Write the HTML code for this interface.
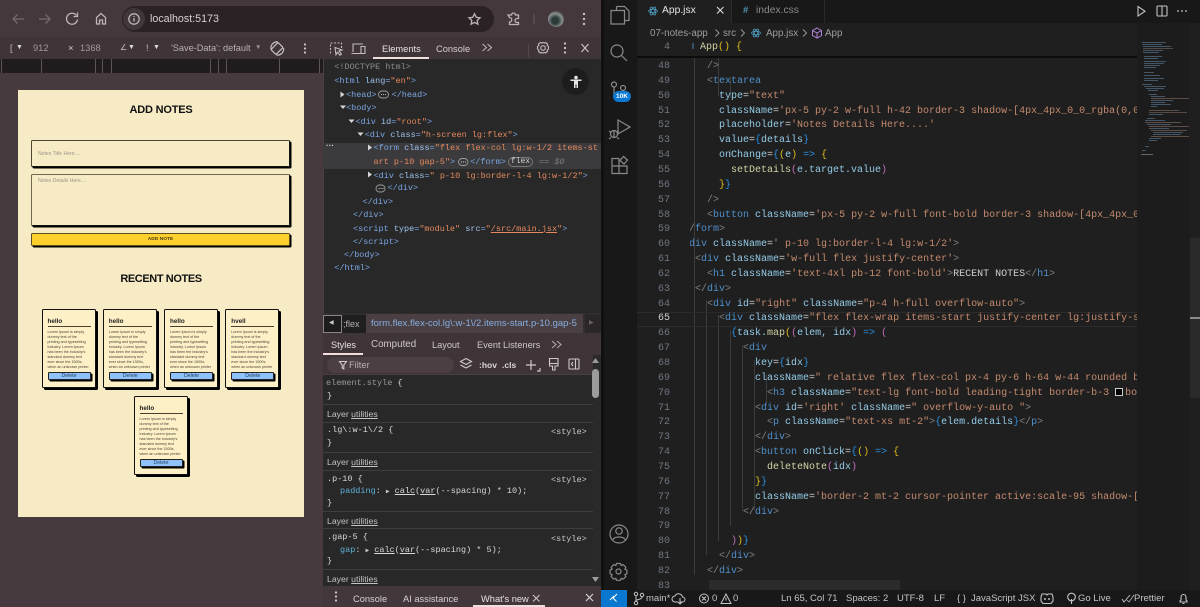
<!DOCTYPE html>
<html lang="en"><head><meta charset="utf-8"><title>Notes</title>
<style>
html,body{margin:0;padding:0;width:1200px;height:607px;overflow:hidden;background:#131313}
*{box-sizing:border-box}
body{position:relative;font-family:"Liberation Sans",sans-serif}
.a,.t,.d,.s,.c,.l{position:absolute}
.t{white-space:pre;line-height:14px;height:14px}
.d{font:8.5px/14px "Liberation Mono",monospace;white-space:pre;color:#7aa5e2;height:14px}
.s{font:8.5px/14px "Liberation Mono",monospace;white-space:pre;color:#d8d8d8;height:14px}
.d i,.s i{font-style:normal}
.n{color:#7aa5e2}.k{color:#9fc3ee}.v{color:#e5895e}.g{color:#8c8c8c}
svg{position:absolute;overflow:visible}
.card{position:absolute;width:54px;height:79px;background:#fdf0c6;border:1px solid #111;border-radius:1.5px;box-shadow:2px 2px 0 #000}
.card b{position:absolute;left:5px;top:8px;font-size:6.3px;line-height:7px;color:#222}
.card u{position:absolute;left:5px;top:16px;width:43px;height:1px;background:#4a4030}
.card p{position:absolute;left:5px;top:20px;margin:0;font-size:3.7px;line-height:5px;color:#4b4538;white-space:pre}
.card span{position:absolute;left:5px;top:62px;width:43px;height:8px;background:#8fc1fb;border:1px solid #222;border-radius:1px;box-shadow:1.5px 1.5px 0 #000;font-size:5.2px;line-height:6px;text-align:center;color:#23415f}
.num{position:absolute;left:640px;width:30px;text-align:right;font:10px/14px "Liberation Mono",monospace;color:#6e7681}
.l{font:10px/14px "Liberation Mono",monospace;white-space:pre;color:#93cbe8;height:14px}
.p{color:#808080}.b{color:#4f8fca}.r{color:#c48a6e}.y{color:#e0bd1c}.m{color:#c86cc2}.u{color:#2a8fe0}.f{color:#d2d2a4}.w{color:#cfcfcf}
.lay{position:absolute;left:323px;width:270px;height:1px;background:#3e3e3e}
.layt{position:absolute;left:327px;font-size:8.7px;line-height:12px;color:#c4c4c4}
.layt u{text-underline-offset:1px}
.st{position:absolute;font:8.5px/14px "Liberation Mono",monospace;color:#c8c8c8;left:551px}
</style></head><body>

<!-- Browser -->
<div class="a" style="left:0;top:0;width:601px;height:607px;background:#463a3e"></div>
<div class="a" style="left:0;top:0;width:601px;height:37px;background:#44383c"></div>
<div class="a" style="left:122px;top:6px;width:372px;height:26px;border-radius:13px;background:#2b2225"></div>
<div class="a" style="left:123px;top:8px;width:22px;height:22px;border-radius:11px;background:#41373a"></div>
<svg style="left:0;top:0" width="601" height="37" fill="none" stroke="#bdb4b7" stroke-width="1.3">
<g stroke="#75696d"><path d="M13 19h11M17.500 14.500 13 19l4.500 4.500"/><path d="M39 19h11M45.500 14.500 50 19l-4.500 4.500"/></g>
<path d="M76.500 15.500a5.500 5.500 0 1 0 1 4"/><path d="M77.500 12.500v4h-4" />
<path d="M96.500 24v-6.500l4.500-4 4.500 4V24h-3v-4h-3v4z"/>
<circle cx="134" cy="19" r="5.200"/><path d="M134 18v3.500M134 16v1"/>
<path d="m474.500 13.800 1.700 3.500 3.800.5-2.800 2.600.7 3.800-3.400-1.800-3.400 1.800.7-3.800-2.800-2.600 3.800-.5z"/>
<path d="M508 15h3.500a2 2 0 0 1 4 0h3v3.500h-1.500a2 2 0 0 0 0 4h1.500V24.500h-9v-2.500a2 2 0 0 0 0-4.500z"/>
<path d="M534 14v10" stroke="#5e5256"/>
<g fill="#c9c1c3" stroke="none"><circle cx="584" cy="14" r="1.200"/><circle cx="584" cy="19" r="1.200"/><circle cx="584" cy="24" r="1.200"/></g>
</svg>
<div class="a" style="left:548px;top:11px;width:16px;height:16px;border-radius:8px;background:radial-gradient(circle at 45% 60%,#2d3a3a 25%,#8a9090 55%,#2a2a2a 85%)"></div>
<div class="t" style="left:150px;top:12px;font-size:10.7px;color:#d6d0d2">localhost:5173</div>

<div class="a" style="left:0;top:37px;width:323px;height:22px;background:#3f3438"></div>
<div class="t" style="left:10px;top:41px;font-size:9px;color:#c7c0c2">[</div>
<div class="t" style="left:16px;top:41px;font-size:7px;color:#dcd6d8">▼</div>
<div class="t" style="left:33px;top:41px;font-size:9.300px;color:#a0989b">912</div>
<div class="t" style="left:68px;top:42px;font-size:9.500px;color:#cfc8ca">×</div>
<div class="t" style="left:80px;top:41px;font-size:9.300px;color:#a0989b">1368</div>
<div class="t" style="left:120px;top:41px;font-size:8px;color:#c7c0c2">∠</div>
<div class="t" style="left:128px;top:41px;font-size:7px;color:#dcd6d8">▼</div>
<div class="t" style="left:146px;top:41px;font-size:9px;color:#c7c0c2">!</div>
<div class="t" style="left:153px;top:41px;font-size:7px;color:#dcd6d8">▼</div>
<div class="t" style="left:171px;top:41px;font-size:9.200px;color:#b9b1b4">'Save-Data': default</div>
<div class="t" style="left:255px;top:41px;font-size:6.500px;color:#9a9194">▼</div>
<svg style="left:270px;top:41px" width="15" height="15" fill="none" stroke="#c8c0c3" stroke-width="1.200"><rect x="3.500" y="2.500" width="7" height="10" rx="1" transform="rotate(45 7 7.500)"/><path d="M1 8a6 6 0 0 1 7-7M13.500 7a6 6 0 0 1-7 7"/></svg>
<svg style="left:302px;top:42px" width="6" height="13" fill="#d0c8ca"><circle cx="3" cy="2.500" r="1.100"/><circle cx="3" cy="6.500" r="1.100"/><circle cx="3" cy="10.500" r="1.100"/></svg>

<div class="a" style="left:0;top:59px;width:323px;height:14px;background:#201c1d"></div>
<svg style="left:0;top:59px" width="323" height="14" stroke="#5c5558"><path d="M1.500 0v14M41.500 0v14M95.500 0v14M102.500 0v14M111.500 0v14M210.500 0v14M218.500 0v14M226.500 0v14M279.500 0v14M319.500 0v14"/></svg>

<!-- Page -->
<div class="a" style="left:18px;top:90px;width:286px;height:427px;background:#f7ebc6"></div>
<div class="t" style="left:18px;top:103px;width:286px;text-align:center;font-size:11px;letter-spacing:-.2px;font-weight:700;color:#111">ADD NOTES</div>
<div class="a" style="left:31px;top:140px;width:259px;height:27px;border:1px solid #4e4832;border-radius:1.500px;box-shadow:1.500px 1.500px 0 #000;border-right-color:#111;border-bottom-color:#111"></div>
<div class="t" style="left:38px;top:147px;font-size:5.100px;color:#9c948a">Notes Title Here....</div>
<div class="a" style="left:31px;top:174px;width:259px;height:52px;border:1px solid #6f6a4f;border-radius:1.500px;box-shadow:1.500px 1.500px 0 #000;border-right-color:#111;border-bottom-color:#111"></div>
<div class="t" style="left:38px;top:174px;font-size:5.100px;color:#9c948a">Notes Details Here....</div>
<div class="a" style="left:31px;top:233px;width:259px;height:13px;background:#fdd02e;border:1px solid #5c4f20;border-radius:1.500px;box-shadow:1.500px 1.500px 0 #000"></div>
<div class="t" style="left:31px;top:232.500px;width:259px;text-align:center;font-size:4.900px;font-weight:700;color:#4a3d18">ADD NOTE</div>
<div class="t" style="left:18px;top:272px;width:286px;text-align:center;font-size:11px;letter-spacing:-.4px;font-weight:700;color:#111">RECENT NOTES</div>

<div class="card" style="left:41.500px;top:309px"><b>hello</b><u></u><p>Lorem Ipsum is simply
dummy text of the
printing and typesetting
industry. Lorem Ipsum
has been the industry's
standard dummy text
ever since the 1500s,
when an unknown printer</p><span>Delete</span></div>
<div class="card" style="left:102.800px;top:309px"><b>hello</b><u></u><p>Lorem Ipsum is simply
dummy text of the
printing and typesetting
industry. Lorem Ipsum
has been the industry's
standard dummy text
ever since the 1500s,
when an unknown printer</p><span>Delete</span></div>
<div class="card" style="left:164px;top:309px"><b>hello</b><u></u><p>Lorem Ipsum is simply
dummy text of the
printing and typesetting
industry. Lorem Ipsum
has been the industry's
standard dummy text
ever since the 1500s,
when an unknown printer</p><span>Delete</span></div>
<div class="card" style="left:225.300px;top:309px"><b>hvell</b><u></u><p>Lorem Ipsum is simply
dummy text of the
printing and typesetting
industry. Lorem Ipsum
has been the industry's
standard dummy text
ever since the 1500s,
when an unknown printer</p><span>Delete</span></div>
<div class="card" style="left:133.500px;top:395.500px"><b>hello</b><u></u><p>Lorem Ipsum is simply
dummy text of the
printing and typesetting
industry. Lorem Ipsum
has been the industry's
standard dummy text
ever since the 1500s,
when an unknown printer</p><span>Delete</span></div>

<!-- DevTools -->
<div class="a" style="left:323px;top:37px;width:278px;height:570px;background:#282828"></div>
<div class="a" style="left:323px;top:59px;width:1px;height:254px;background:#4a4044"></div>
<div class="a" style="left:323px;top:37px;width:278px;height:22px;background:#3f3438"></div>
<svg style="left:323px;top:37px" width="278" height="22" fill="none" stroke="#c3bbbe" stroke-width="1.100">
<path d="M8 16H7.500V6h11v5" stroke-dasharray="2 1.500"/><path d="M12 10.500l7 2.500-3 1 2.500 3-1.500 1.200-2.500-3-1.500 2.500z"/>
<path d="M30 15V7h10M28.500 16.500h9M38 9.500h4v7h-4z"/>
<path d="M205.500 7v13" stroke="#544a4e"/>
<circle cx="220" cy="11" r="2.300"/><path d="m220 5.500 1.500.5 1-.5 2 1.500-.3 1.500 1.300 1v2.500l-1.300 1 .3 1.500-2 1.500-1-.5-1.500.5-1.500-.5-1 .5-2-1.500.3-1.500-1.300-1V9.500l1.300-1-.3-1.500 2-1.500 1 .5z"/>
<path d="m258.500 7 7 8M265.500 7l-7 8" stroke-width="1.300"/>
<path d="m159.500 7 4 3.500-4 3.500M164.500 7l4 3.500-4 3.500" stroke-width="1"/>
<g fill="#d0c8ca" stroke="none"><circle cx="242" cy="6.500" r="1.100"/><circle cx="242" cy="11" r="1.100"/><circle cx="242" cy="15.500" r="1.100"/></g>
</svg>
<div class="t" style="left:382px;top:42px;font-size:9.300px;color:#e8e2e4">Elements</div>
<div class="a" style="left:373px;top:56.500px;width:56px;height:2px;background:#f3dcdc"></div>
<div class="t" style="left:436px;top:42px;font-size:9.300px;color:#d7d0d2">Console</div>

<div class="a" style="left:323px;top:143px;width:278px;height:26px;background:#3b3b3d"></div>
<div class="t" style="left:326px;top:139px;font-size:8px;color:#cfcfcf;font-weight:700">···</div>

<div class="d g" style="left:334.300px;top:60px">&lt;!DOCTYPE html&gt;</div>
<div class="d" style="left:334.300px;top:74px">&lt;html <i class="k">lang</i>=<i class="v">"en"</i>&gt;</div>
<div class="d" style="left:346px;top:87.500px">&lt;head&gt;<i style="display:inline-block;width:15px"></i>&lt;/head&gt;</div>
<div class="d" style="left:346px;top:101px">&lt;body&gt;</div>
<div class="d" style="left:355.500px;top:114.500px">&lt;div <i class="k">id</i>=<i class="v">"root"</i>&gt;</div>
<div class="d" style="left:364.700px;top:128px">&lt;div <i class="k">class</i>=<i class="v">"h-screen lg:flex"</i>&gt;</div>
<div class="a" style="left:364px;top:141px;width:237px;height:14px;overflow:hidden"><div class="d" style="left:9.500px;top:0">&lt;form <i class="k">class</i>=<i class="v">"flex flex-col lg:w-1/2 items-st</i></div></div>
<div class="d" style="left:373.500px;top:155px"><i class="v">art p-10 gap-5"</i>&gt;<i style="display:inline-block;width:15px"></i>&lt;/form&gt;</div>
<div class="a" style="left:508px;top:157px;width:25px;height:10px;border:1px solid #777;border-radius:5px;font:8px/8px 'Liberation Mono',monospace;color:#d4d4d4;text-align:center">flex</div>
<div class="d" style="left:539px;top:155px;color:#7d7d7d">== <i style="font-style:italic">$0</i></div>
<div class="d" style="left:373.500px;top:168.500px">&lt;div <i class="k">class</i>=<i class="v">" p-10 lg:border-l-4 lg:w-1/2"</i>&gt;</div>
<div class="d" style="left:387.500px;top:181px">&lt;/div&gt;</div>
<div class="d" style="left:362.500px;top:194.500px">&lt;/div&gt;</div>
<div class="d" style="left:353px;top:208px">&lt;/div&gt;</div>
<div class="d" style="left:353px;top:221.500px">&lt;script <i class="k">type</i>=<i class="v">"module"</i> <i class="k">src</i>=<i class="v">"<u>/src/main.jsx</u>"</i>&gt;</div>
<div class="d" style="left:353px;top:234.500px">&lt;/script&gt;</div>
<div class="d" style="left:344px;top:247.500px">&lt;/body&gt;</div>
<div class="d" style="left:334.300px;top:261px">&lt;/html&gt;</div>

<svg style="left:323px;top:59px" width="278" height="140" fill="#d6d6d6">
<path d="M17.500 32.500v6l4-3zM17 46.500h6l-3 3.500zM25.500 60.500h6l-3 3.500zM34.500 73.500h6l-3 3.500zM45 85.500v6l4-3zM45 112.500v6l4-3z"/>
<g fill="none" stroke="#9b9b9b" stroke-width=".9"><rect x="55.500" y="32" width="10" height="7" rx="3.500"/><rect x="135.500" y="99.500" width="9.500" height="7" rx="3.500"/><rect x="53" y="126" width="9" height="7" rx="3.500"/></g>
<g fill="#c4c4c4"><rect x="58" y="35" width="1" height="1"/><rect x="60" y="35" width="1" height="1"/><rect x="62" y="35" width="1" height="1"/><rect x="138" y="102.500" width="1" height="1"/><rect x="140" y="102.500" width="1" height="1"/><rect x="142" y="102.500" width="1" height="1"/><rect x="55.500" y="129" width="1" height="1"/><rect x="57.500" y="129" width="1" height="1"/><rect x="59.500" y="129" width="1" height="1"/></g>
</svg>
<div class="a" style="left:562px;top:68px;width:27px;height:27px;border-radius:14px;background:#1d1d1d"></div>
<svg style="left:569px;top:75px" width="14" height="14" fill="#e4e4e4"><circle cx="7" cy="2.500" r="1.800"/><path d="M1.500 4.500h11v1.500H9v7H7.500v-3.500h-1V13H5V6H1.500z"/></svg>

<div class="a" style="left:323px;top:313px;width:278px;height:20px;background:#322d2f"></div>
<div class="a" style="left:323px;top:315px;width:19px;height:18px;background:#1c1c1c;border:1px solid #8b8386"></div>
<div class="t" style="left:329px;top:316px;font-size:6px;color:#ccc">◀</div>
<div class="a" style="left:342px;top:315px;width:24px;height:18px;background:#1f1f1f"></div>
<div class="t" style="left:343px;top:317px;font-size:9px;color:#b8b2b4">;flex</div>
<div class="a" style="left:366px;top:314px;width:217px;height:19px;background:#4a3f43"></div>
<div class="t" style="left:371px;top:317px;font-size:9.500px;color:#85aee0">form.flex.flex-col.lg\:w-1\/2.items-start.p-10.gap-5</div>
<div class="a" style="left:585px;top:315px;width:16px;height:18px;background:#2b2627"></div>
<div class="t" style="left:589px;top:316px;font-size:6px;color:#6a6265">▶</div>

<div class="a" style="left:323px;top:333px;width:278px;height:23px;background:#3f3438"></div>
<div class="t" style="left:331px;top:338px;font-size:9.200px;color:#e6dfe1">Styles</div>
<div class="a" style="left:323px;top:352.500px;width:40px;height:2px;background:#f3dcdc"></div>
<div class="t" style="left:371px;top:338px;font-size:9.800px;color:#cfc8ca">Computed</div>
<div class="t" style="left:432px;top:338px;font-size:9.200px;color:#cfc8ca">Layout</div>
<div class="t" style="left:477px;top:338px;font-size:9.200px;color:#cfc8ca">Event Listeners</div>
<div class="a" style="left:323px;top:355px;width:270px;height:20px;background:#3f3438"></div>
<div class="a" style="left:327px;top:357px;width:127px;height:16px;border-radius:8px;background:#4b3f44"></div>
<div class="t" style="left:349px;top:358px;font-size:9.300px;color:#b9b1b4">Filter</div>
<div class="t" style="left:479px;top:358px;font-size:8.500px;color:#dcd6d8;font-weight:700">:hov</div>
<div class="t" style="left:502px;top:358px;font-size:8.500px;color:#dcd6d8;font-weight:700">.cls</div>
<svg style="left:323px;top:333px" width="278" height="42" fill="none" stroke="#d0c8ca" stroke-width="1.100">
<path d="m229 8 4 3.500-4 3.500M234 8l4 3.500-4 3.500" stroke="#b0a8ab"/>
<path d="M16.500 28.500h7l-2.700 3.500v4l-1.600-1v-3z"/>
<path d="m143 25.500 5.500 3-5.500 3-5.500-3zM137.500 32l5.500 3 5.500-3"/>
<path d="M203 32h10M208 27v10M214 38h3v-3" stroke-width="1.200"/>
<path d="M226.500 25.500h8.500v5h-8.500zM226.500 30.500h8.500v2.500h-3v4h-2.500v-4h-3z"/>
<rect x="246" y="26" width="10" height="10" rx=".8"/><path d="M252.500 26v10M250 29l-1.500 2 1.500 2"/>
</svg>
<div class="a" style="left:323px;top:374px;width:270px;height:1px;background:#4a4044"></div>

<div class="s" style="left:326px;top:376px"><i style="color:#9a9a9a">element.style</i> {</div>
<div class="s" style="left:327px;top:389px">}</div>
<div class="lay" style="top:404px"></div>
<div class="layt" style="top:408px">Layer <u>utilities</u></div>
<div class="lay" style="top:422px"></div>
<div class="s" style="left:327px;top:423px">.lg\:w-1\/2 {</div>
<div class="st" style="top:425px">&lt;style&gt;</div>
<div class="s" style="left:327px;top:436px">}</div>
<div class="lay" style="top:452px"></div>
<div class="layt" style="top:456px">Layer <u>utilities</u></div>
<div class="lay" style="top:470px"></div>
<div class="s" style="left:327px;top:472px">.p-10 {</div>
<div class="st" style="top:473px">&lt;style&gt;</div>
<div class="s" style="left:340px;top:484px"><i style="color:#5db0d7">padding</i>: <i style="color:#ccc;font-size:6px">▶</i> <u>calc</u>(<u>var</u>(--spacing) * 10);</div>
<div class="s" style="left:327px;top:496px">}</div>
<div class="lay" style="top:511px"></div>
<div class="layt" style="top:515px">Layer <u>utilities</u></div>
<div class="lay" style="top:528px"></div>
<div class="s" style="left:327px;top:530px">.gap-5 {</div>
<div class="st" style="top:532px">&lt;style&gt;</div>
<div class="s" style="left:340px;top:543px"><i style="color:#5db0d7">gap</i>: <i style="color:#ccc;font-size:6px">▶</i> <u>calc</u>(<u>var</u>(--spacing) * 5);</div>
<div class="s" style="left:327px;top:554px">}</div>
<div class="lay" style="top:569px"></div>
<div class="layt" style="top:573px">Layer <u>utilities</u></div>

<div class="a" style="left:593px;top:355px;width:8px;height:231px;background:#2a2a2a"></div>
<div class="a" style="left:592px;top:369px;width:7px;height:29px;border-radius:3.500px;background:#9c9c9c"></div>
<svg style="left:591px;top:357px" width="9" height="230" fill="#9c9c9c"><path d="M4.500 1 8 6H1zM1 220h7l-3.500 5z"/></svg>

<div class="a" style="left:323px;top:586px;width:278px;height:21px;background:#42373b"></div>
<svg style="left:333px;top:590px" width="6" height="13" fill="#d0c8ca"><circle cx="3" cy="2.500" r="1.100"/><circle cx="3" cy="6.500" r="1.100"/><circle cx="3" cy="10.500" r="1.100"/></svg>
<div class="t" style="left:353px;top:592px;font-size:9.300px;color:#d7d0d2">Console</div>
<div class="t" style="left:403px;top:592px;font-size:9.300px;color:#d7d0d2">AI assistance</div>
<div class="t" style="left:481px;top:592px;font-size:9.300px;color:#e8e2e4">What's new</div>
<svg style="left:532px;top:594px" width="9" height="9" fill="none" stroke="#d0c8ca"><path d="m1 1 6.500 6.500M7.500 1 1 7.500"/></svg>
<svg style="left:585px;top:593px" width="9" height="9" fill="none" stroke="#d8d2d4" stroke-width="1.200"><path d="m1 1 7 7M8 1 1 8"/></svg>
<div class="a" style="left:473px;top:605px;width:72px;height:2px;background:#f3dcdc"></div>

<!-- VS Code -->
<div class="a" style="left:601px;top:0;width:4px;height:607px;background:#101010"></div>
<div class="a" style="left:604px;top:0;width:33px;height:607px;background:#181818"></div>
<div class="a" style="left:637px;top:0;width:563px;height:607px;background:#1f1f1f"></div>
<div class="a" style="left:637px;top:0;width:563px;height:23px;background:#181818"></div>
<div class="a" style="left:637px;top:0;width:94px;height:23px;background:#1f1f1f"></div>
<div class="a" style="left:731px;top:0;width:1px;height:23px;background:#2a2a2a"></div>
<div class="a" style="left:824px;top:0;width:1px;height:23px;background:#2a2a2a"></div>

<svg style="left:604px;top:0" width="33" height="607" fill="none" stroke="#8a8a8a" stroke-width="1.200">
<path d="M12.500 6.500h8l4.500 4.500v9.500h-4M12.500 6.500v3.500M7 10.500h13.500v13.500H7z"/>
<circle cx="13" cy="51" r="6"/><path d="m17.500 55.500 5.500 5.500"/>
<circle cx="10" cy="84.500" r="2.500"/><circle cx="19" cy="88" r="2.500"/><path d="M10 87v9M19 90.500c0 3-9 2-9 6"/>
<path d="M14 120v14l12-7z"/><circle cx="10" cy="134" r="3.500"/><path d="M5 131l2 1.500M15 131l-2 1.500M5 139l2-1.500M15 139l-2-1.500M10 130v8"/>
<path d="M8 158.500h7v7.500H8zM8 166h7v7.500H8zM15 166h8v7.500h-8z"/><path d="m19.500 156.500 4 3.500-3.500 4-4-3.500z"/>
<circle cx="15" cy="534" r="9"/><circle cx="15" cy="531" r="3.200"/><path d="M8.500 540c2-4 11-4 13 0"/>
<circle cx="14.500" cy="571.500" r="2.500"/><path d="m12.500 563.500h4l.7 2 2-.9 2.600 2.600-.9 2 2 .8v3.800l-2 .8.900 2-2.600 2.600-2-.9-.7 2h-4l-.7-2-2 .9-2.600-2.600.9-2-2-.8V570l2-.8-.9-2 2.600-2.600 2 .9z"/>
</svg>
<div class="a" style="left:613px;top:91px;width:18px;height:11px;border-radius:6px;background:#0a78d0;color:#fff;font-size:6.500px;line-height:11px;font-weight:700;text-align:center">10K</div>

<svg style="left:648px;top:6px" width="10" height="10" fill="none" stroke="#4e9cc0" stroke-width=".8"><ellipse cx="5" cy="5" rx="4.500" ry="1.800"/><ellipse cx="5" cy="5" rx="4.500" ry="1.800" transform="rotate(60 5 5)"/><ellipse cx="5" cy="5" rx="4.500" ry="1.800" transform="rotate(120 5 5)"/></svg>
<div class="t" style="left:662px;top:4px;font-size:10.300px;color:#e3e3e3">App.jsx</div>
<svg style="left:716px;top:6px" width="9" height="9" fill="none" stroke="#ddd" stroke-width="1.100"><path d="m1 1 6.500 6.500M7.500 1 1 7.500"/></svg>
<div class="t" style="left:743px;top:4px;font-size:9.500px;color:#519aba;font-weight:700">#</div>
<div class="t" style="left:756px;top:4px;font-size:10.300px;color:#8a8a8a">index.css</div>

<div class="t" style="left:650px;top:27px;font-size:9.800px;color:#9d9d9d">07-notes-app</div>
<div class="t" style="left:723px;top:27px;font-size:9.800px;color:#9d9d9d">src</div>
<div class="t" style="left:766px;top:27px;font-size:9.800px;color:#9d9d9d">App.jsx</div>
<div class="t" style="left:825px;top:27px;font-size:9.800px;color:#9d9d9d">App</div>
<svg style="left:600px;top:20px" width="300" height="30" fill="none" stroke="#9d9d9d" stroke-width=".9">
<path d="m115.500 9.500 3.500 3.500-3.500 3.500M141 9.500l3.500 3.500-3.500 3.500M203 9.500l3.500 3.500-3.500 3.500"/>
<g stroke="#4e9cc0" stroke-width=".8"><ellipse cx="156" cy="13" rx="4.500" ry="1.800"/><ellipse cx="156" cy="13" rx="4.500" ry="1.800" transform="rotate(60 156 13)"/><ellipse cx="156" cy="13" rx="4.500" ry="1.800" transform="rotate(120 156 13)"/></g>
<path d="m217 8 4.500 2.500v5L217 18l-4.500-2.500v-5zM212.500 10.500l4.500 2.500 4.500-2.500M217 13v5" stroke="#b180d7" stroke-width="1"/>
</svg>
<svg style="left:1130px;top:0" width="70" height="23" fill="none" stroke="#c4c4c4" stroke-width="1.100">
<path d="M8 6.500v9.500l7-4.750z"/><rect x="27" y="6" width="10" height="10" rx="1"/><path d="M32 6v10"/>
<g fill="#c4c4c4" stroke="none"><circle cx="48" cy="11" r=".9"/><circle cx="52" cy="11" r=".9"/><circle cx="56" cy="11" r=".9"/></g>
</svg>

<!-- indent guides -->
<svg style="left:637px;top:57px" width="500" height="535" stroke="#3c3c3c" fill="none">
<path d="M57.500 0v518M69.500 243v255M81.500 258v226"/>
<path d="M93.500 273v196M105.500 288v166M117.500 303v150M129.500 318v30"/>
<path d="M81.500 -1v40"/>
<path d="M93.500 92v8M93.500 21v20"/>
</svg>
<div class="a" style="left:637px;top:312px;width:500px;height:15px;border-top:1px solid #2b2b2b;border-bottom:1px solid #2b2b2b"></div>

<div class="num" style="top:41px;color:#7a7a7a">4</div>
<div class="num" style="top:60px">48</div><div class="num" style="top:74.800px">49</div><div class="num" style="top:89.600px">50</div><div class="num" style="top:104.500px">51</div><div class="num" style="top:119.300px">52</div><div class="num" style="top:134.200px">53</div><div class="num" style="top:149px">54</div><div class="num" style="top:163.900px">55</div><div class="num" style="top:178.700px">56</div><div class="num" style="top:193.600px">57</div><div class="num" style="top:208.500px">58</div><div class="num" style="top:223.300px">59</div><div class="num" style="top:238.200px">60</div><div class="num" style="top:253px">61</div><div class="num" style="top:267.900px">62</div><div class="num" style="top:282.700px">63</div><div class="num" style="top:297.600px">64</div><div class="num" style="top:312.400px;color:#cfcfcf">65</div><div class="num" style="top:327.300px">66</div><div class="num" style="top:342.100px">67</div><div class="num" style="top:357px">68</div><div class="num" style="top:371.800px">69</div><div class="num" style="top:386.700px">70</div><div class="num" style="top:401.500px">71</div><div class="num" style="top:416.400px">72</div><div class="num" style="top:431.200px">73</div><div class="num" style="top:446.100px">74</div><div class="num" style="top:460.900px">75</div><div class="num" style="top:475.800px">76</div><div class="num" style="top:490.600px">77</div><div class="num" style="top:505.500px">78</div><div class="num" style="top:520.300px">79</div><div class="num" style="top:535.200px">80</div><div class="num" style="top:550px">81</div><div class="num" style="top:564.900px">82</div><div class="num" style="top:579.700px">83</div>

<div class="a" style="left:690px;top:0;width:447px;height:590px;overflow:hidden" id="code">
<div class="l" style="left:0;top:41px"><span class="b">ו</span></div>
<div class="l w" style="left:10px;top:41px"><span class="f">App</span><span class="y">()</span> <span class="y">{</span></div>
<div class="l" style="left:17px;top:60px"><span class="p">/&gt;</span></div>
<div class="l" style="left:17px;top:74.800px"><span class="p">&lt;</span><span class="b">textarea</span></div>
<div class="l" style="left:29px;top:89.600px">type<span class="w">=</span><span class="r">"text"</span></div>
<div class="l" style="left:29px;top:104.500px">className<span class="w">=</span><span class="r">'px-5 py-2 w-full h-42 border-3 shadow-[4px_4px_0_0_rgba(0,0</span></div>
<div class="l" style="left:29px;top:119.300px">placeholder<span class="w">=</span><span class="r">'Notes Details Here....'</span></div>
<div class="l" style="left:29px;top:134.200px">value<span class="w">=</span><span class="u">{</span>details<span class="u">}</span></div>
<div class="l" style="left:29px;top:149px">onChange<span class="w">=</span><span class="u">{</span><span class="y">(</span>e<span class="y">)</span> <span class="u">=&gt;</span> <span class="y">{</span></div>
<div class="l" style="left:41px;top:163.900px"><span class="f">setDetails</span><span class="m">(</span>e.target.value<span class="m">)</span></div>
<div class="l" style="left:29px;top:178.700px"><span class="y">}</span><span class="u">}</span></div>
<div class="l" style="left:17px;top:193.600px"><span class="p">/&gt;</span></div>
<div class="l" style="left:17px;top:208.500px"><span class="p">&lt;</span><span class="b">button</span> className<span class="w">=</span><span class="r">'px-5 py-2 w-full font-bold border-3 shadow-[4px_4px_0</span></div>
<div class="l" style="left:-1px;top:223.300px"><span class="p">/</span><span class="b">form</span><span class="p">&gt;</span></div>
<div class="l" style="left:-1px;top:238.200px"><span class="b">div</span> className<span class="w">=</span><span class="r">' p-10 lg:border-l-4 lg:w-1/2'</span><span class="p">&gt;</span></div>
<div class="l" style="left:5px;top:253px"><span class="p">&lt;</span><span class="b">div</span> className<span class="w">=</span><span class="r">'w-full flex justify-center'</span><span class="p">&gt;</span></div>
<div class="l" style="left:17px;top:267.900px"><span class="p">&lt;</span><span class="b">h1</span> className<span class="w">=</span><span class="r">'text-4xl pb-12 font-bold'</span><span class="p">&gt;</span><span class="w">RECENT NOTES</span><span class="p">&lt;/</span><span class="b">h1</span><span class="p">&gt;</span></div>
<div class="l" style="left:5px;top:282.700px"><span class="p">&lt;/</span><span class="b">div</span><span class="p">&gt;</span></div>
<div class="l" style="left:17px;top:297.600px"><span class="p">&lt;</span><span class="b">div</span> id<span class="w">=</span><span class="r">"right"</span> className<span class="w">=</span><span class="r">"p-4 h-full overflow-auto"</span><span class="p">&gt;</span></div>
<div class="l" style="left:29px;top:312.400px"><span class="p">&lt;</span><span class="b">div</span> className<span class="w">=</span><span class="r">"flex flex-wrap items-start justify-center lg:justify-s</span></div>
<div class="l" style="left:41px;top:327.300px"><span class="u">{</span>task.<span class="f">map</span><span class="y">(</span><span class="m">(</span>elem, idx<span class="m">)</span> <span class="u">=&gt;</span> <span class="m">(</span></div>
<div class="l" style="left:53px;top:342.100px"><span class="p">&lt;</span><span class="b">div</span></div>
<div class="l" style="left:65px;top:357px">key<span class="w">=</span><span class="u">{</span>idx<span class="u">}</span></div>
<div class="l" style="left:65px;top:371.800px">className<span class="w">=</span><span class="r">" relative flex flex-col px-4 py-6 h-64 w-44 rounded b</span></div>
<div class="l" style="left:77px;top:386.700px"><span class="p">&lt;</span><span class="b">h3</span> className<span class="w">=</span><span class="r">"text-lg font-bold leading-tight border-b-3 <span style="display:inline-block;width:8px;height:8px;background:#000;border:1px solid #ccc;vertical-align:-1px;margin:0 2px 0 0"></span>bo</span></div>
<div class="l" style="left:65px;top:401.500px"><span class="p">&lt;</span><span class="b">div</span> id<span class="w">=</span><span class="r">'right'</span> className<span class="w">=</span><span class="r">" overflow-y-auto "</span><span class="p">&gt;</span></div>
<div class="l" style="left:77px;top:416.400px"><span class="p">&lt;</span><span class="b">p</span> className<span class="w">=</span><span class="r">"text-xs mt-2"</span><span class="p">&gt;</span><span class="u">{</span>elem.details<span class="u">}</span><span class="p">&lt;/</span><span class="b">p</span><span class="p">&gt;</span></div>
<div class="l" style="left:65px;top:431.200px"><span class="p">&lt;/</span><span class="b">div</span><span class="p">&gt;</span></div>
<div class="l" style="left:65px;top:446.100px"><span class="p">&lt;</span><span class="b">button</span> onClick<span class="w">=</span><span class="u">{</span><span class="y">()</span> <span class="u">=&gt;</span> <span class="y">{</span></div>
<div class="l" style="left:77px;top:460.900px"><span class="f">deleteNote</span><span class="m">(</span>idx<span class="m">)</span></div>
<div class="l" style="left:65px;top:475.800px"><span class="y">}</span><span class="u">}</span></div>
<div class="l" style="left:65px;top:490.600px">className<span class="w">=</span><span class="r">'border-2 mt-2 cursor-pointer active:scale-95 shadow-[</span></div>
<div class="l" style="left:53px;top:505.500px"><span class="p">&lt;/</span><span class="b">div</span><span class="p">&gt;</span></div>
<div class="l" style="left:41px;top:535.200px"><span class="m">)</span><span class="y">)</span><span class="u">}</span></div>
<div class="l" style="left:29px;top:550px"><span class="p">&lt;/</span><span class="b">div</span><span class="p">&gt;</span></div>
<div class="l" style="left:17px;top:564.900px"><span class="p">&lt;/</span><span class="b">div</span><span class="p">&gt;</span></div>
</div>
<div class="a" style="left:637px;top:56px;width:500px;height:2px;background:#0c0c0c"></div>
<div class="a" style="left:709px;top:580px;width:191px;height:10px;background:#2b2b2b"></div>

<!-- minimap -->
<div class="a" style="left:1137px;top:23px;width:52px;height:567px;background:#1c1c1c"></div>
<div class="a" style="left:1189px;top:23px;width:11px;height:567px;background:#1f1f1f"></div>
<div class="a" style="left:1190px;top:238px;width:10px;height:160px;background:#2a2a2a"></div>
<div class="a" style="left:1190px;top:317px;width:10px;height:2px;background:#8a8a8a"></div>
<svg style="left:1137px;top:40px;opacity:.7" width="52" height="120" fill="#55708a">
<rect x="5" y="2" width="24" height="1"/><rect x="5" y="4" width="20" height="1"/><rect x="6" y="6" width="28" height="1"/><rect x="6" y="8" width="30" height="1" fill="#6e6058"/><rect x="6" y="10" width="20" height="1"/><rect x="6" y="12" width="16" height="1"/>
<rect x="7" y="16" width="18" height="1"/><rect x="7" y="18" width="14" height="1"/><rect x="7" y="21" width="22" height="1"/><rect x="7" y="23" width="20" height="1"/><rect x="7" y="25" width="16" height="1"/><rect x="7" y="27" width="12" height="1"/>
<rect x="7" y="32" width="10" height="1"/><rect x="7" y="35" width="16" height="1"/><rect x="7" y="38" width="20" height="1"/><rect x="7" y="40" width="14" height="1"/>
<rect x="5" y="44" width="10" height="1"/><rect x="7" y="46" width="22" height="1"/><rect x="9" y="48" width="18" height="1"/><rect x="11" y="50" width="10" height="1"/>
<rect x="12" y="54" width="8" height="1"/><rect x="14" y="56" width="14" height="1"/><rect x="14" y="58" width="38" height="1" fill="#7a6458"/><rect x="14" y="60" width="22" height="1"/><rect x="14" y="62" width="14" height="1"/><rect x="14" y="64" width="20" height="1"/><rect x="14" y="66" width="6" height="1"/>
<rect x="12" y="70" width="30" height="1" fill="#7a6458"/><rect x="12" y="72" width="38" height="1" fill="#6f6056"/><rect x="12" y="74" width="14" height="1"/><rect x="10" y="78" width="8" height="1"/><rect x="8" y="80" width="20" height="1"/><rect x="8" y="82" width="36" height="1" fill="#7a6458"/>
<rect x="10" y="84" width="24" height="1"/><rect x="12" y="86" width="40" height="1" fill="#7a6458"/><rect x="12" y="88" width="20" height="1"/><rect x="14" y="90" width="36" height="1" fill="#7a6458"/><rect x="16" y="92" width="30" height="1"/><rect x="16" y="94" width="28" height="1"/><rect x="14" y="96" width="38" height="1" fill="#7a6458"/><rect x="12" y="98" width="12" height="1"/><rect x="12" y="100" width="8" height="1"/>
<rect x="8" y="106" width="4" height="1"/><rect x="5" y="110" width="4" height="1"/><rect x="4" y="114" width="12" height="1" fill="#888"/>
</svg>

<!-- status bar -->
<div class="a" style="left:604px;top:590px;width:596px;height:17px;background:#181818"></div>
<div class="a" style="left:601px;top:590px;width:26px;height:17px;background:#0a78d0"></div>
<svg style="left:600px;top:590px" width="100" height="17" fill="none" stroke="#fff" stroke-width="1"><path d="m10 10 4-4M17 4l-4 4 3.500 3.500" /></svg>
<svg style="left:632px;top:590px" width="110" height="17" fill="none" stroke="#c4c4c4" stroke-width="1">
<circle cx="4" cy="4" r="1.700"/><circle cx="4" cy="13" r="1.700"/><circle cx="10" cy="5" r="1.700"/><path d="M4 6v5M10 7c0 3-6 2-6 4"/>
<path d="M46 12h-3a3 3 0 0 1 0-6 4 4 0 0 1 7.500 1 2.500 2.500 0 0 1 0 5h-2M48 8v6m-2-2 2 2 2-2"/>
<circle cx="72" cy="8.500" r="4.500"/><path d="m70 6.500 4 4M74 6.500l-4 4"/>
<path d="m94 4 5 9.500H89zM94 7.500v3"/>
</svg>
<div class="t" style="left:646px;top:591.500px;font-size:9.500px;color:#c4c4c4">main*</div>
<div class="t" style="left:712px;top:591.500px;font-size:9.500px;color:#c4c4c4">0</div>
<div class="t" style="left:733px;top:591.500px;font-size:9.500px;color:#c4c4c4">0</div>
<div class="t" style="left:781px;top:591.500px;font-size:9.500px;color:#c4c4c4">Ln 65, Col 71</div>
<div class="t" style="left:846px;top:591.500px;font-size:9.500px;color:#c4c4c4">Spaces: 2</div>
<div class="t" style="left:897px;top:591.500px;font-size:9.500px;color:#c4c4c4">UTF-8</div>
<div class="t" style="left:934px;top:591.500px;font-size:9.500px;color:#c4c4c4">LF</div>
<div class="t" style="left:957px;top:591.500px;font-size:9.500px;color:#c4c4c4">{ }</div>
<div class="t" style="left:971px;top:591.500px;font-size:9.500px;color:#c4c4c4">JavaScript JSX</div>
<div class="t" style="left:1078px;top:591.500px;font-size:9.500px;color:#c4c4c4">Go Live</div>
<div class="t" style="left:1134px;top:591.500px;font-size:9.500px;color:#c4c4c4">Prettier</div>
<svg style="left:1035px;top:590px" width="160" height="17" fill="none" stroke="#c4c4c4" stroke-width="1.100">
<path d="M7 4h4l1 1 1-1h4l1 3v4l-2 2.500h-8L6 11V7z"/><path d="M10 8v2M14 8v2" stroke-width="1.400"/>
<circle cx="36.500" cy="7" r="3.800"/><path d="M36.500 9v5"/>
<path d="m87 9 2 3 6-7" stroke-width=".9"/><path d="m92 10 2 2 5-7" stroke-width=".7"/>
<path d="M145 12h7v-1l-1-1V7a2.500 2.500 0 0 0-5 0v3l-1 1zM147.500 13.500h2"/>
</svg>
</body></html>
